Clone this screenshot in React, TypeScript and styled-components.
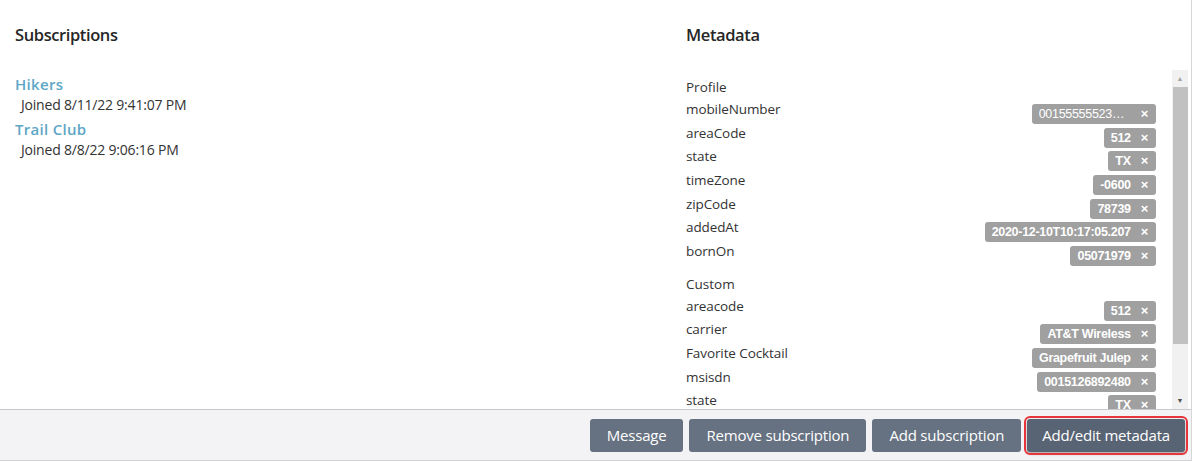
import React, { FC } from 'react';
import styled, { createGlobalStyle } from 'styled-components';

const GlobalStyle = createGlobalStyle`
  html, body {
    margin: 0;
    padding: 0;
    background: #ffffff;
  }
  body {
    font-family: 'Open Sans', 'Liberation Sans', sans-serif;
    color: #333;
  }
`;

interface MetaItem {
  key: string;
  value: string;
  clip?: boolean;
}

interface MetaSection {
  title: string;
  items: MetaItem[];
}

const subscriptions = [
  { name: 'Hikers', joined: 'Joined 8/11/22 9:41:07 PM' },
  { name: 'Trail Club', joined: 'Joined 8/8/22 9:06:16 PM' },
];

const sections: MetaSection[] = [
  {
    title: 'Profile',
    items: [
      { key: 'mobileNumber', value: '0015555552345678', clip: true },
      { key: 'areaCode', value: '512' },
      { key: 'state', value: 'TX' },
      { key: 'timeZone', value: '-0600' },
      { key: 'zipCode', value: '78739' },
      { key: 'addedAt', value: '2020-12-10T10:17:05.207' },
      { key: 'bornOn', value: '05071979' },
    ],
  },
  {
    title: 'Custom',
    items: [
      { key: 'areacode', value: '512' },
      { key: 'carrier', value: 'AT&T Wireless' },
      { key: 'Favorite Cocktail', value: 'Grapefruit Julep' },
      { key: 'msisdn', value: '0015126892480' },
      { key: 'state', value: 'TX' },
      { key: 'zip', value: '78739' },
    ],
  },
];

const Page = styled.div`
  width: 1191px;
  height: 461px;
  border-right: 1px solid #d6d6d8;
  display: flex;
  flex-direction: column;
  overflow: hidden;
`;

const Body = styled.div`
  flex: 1;
  min-height: 0;
  display: grid;
  grid-template-columns: 671px 1fr;
  padding-left: 15px;
`;

const Column = styled.div`
  display: flex;
  flex-direction: column;
  min-height: 0;
`;

const Heading = styled.h2`
  margin: 0;
  padding-top: 23px;
  height: 46px;
  box-sizing: border-box;
  font-size: 16.5px;
  font-weight: 600;
  letter-spacing: -0.4px;
  color: #262626;
`;

const SubList = styled.div`
  padding-top: 28px;
  display: flex;
  flex-direction: column;
`;

const SubName = styled.a`
  font-size: 15px;
  font-weight: 600;
  color: #5ea6c6;
  line-height: 20px;
  height: 21px;
  letter-spacing: 0.3px;
  text-decoration: none;
  cursor: pointer;
`;

const SubJoined = styled.div`
  padding-left: 6px;
  font-size: 14px;
  line-height: 20px;
  height: 24px;
  color: #333;
  letter-spacing: -0.2px;
`;

const MetaBox = styled.div`
  flex: 1;
  min-height: 0;
  margin-top: 22px;
  display: flex;
  padding-right: 3px;
`;

const MetaScroll = styled.div`
  flex: 1;
  overflow: hidden;
  padding: 8px 16px 0 0;
`;

const Section = styled.div`
  margin-bottom: 7px;
`;

const SectionTitle = styled.div`
  font-size: 13.5px;
  line-height: 22px;
  height: 24px;
  color: #333;
`;

const Row = styled.div`
  display: flex;
  justify-content: space-between;
  align-items: flex-start;
  height: 23.67px;
`;

const Key = styled.div`
  font-size: 13.5px;
  line-height: 19px;
  color: #333;
  letter-spacing: -0.1px;
`;

const Tag = styled.span`
  margin-top: 4px;
  display: inline-flex;
  align-items: center;
  gap: 10px;
  height: 20px;
  padding: 0 8px 0 7px;
  border-radius: 3px;
  background: #a0a0a0;
  color: #fff;
  font-family: 'Liberation Sans', sans-serif;
  font-size: 12.5px;
  font-weight: 700;
  letter-spacing: -0.3px;
`;

const TagText = styled.span<{ $clip?: boolean }>`
  white-space: nowrap;
  ${(p) =>
    p.$clip &&
    `
    max-width: 92px;
    overflow: hidden;
    text-overflow: ellipsis;
    font-weight: 400;
  `}
`;

const TagClose = styled.span`
  font-size: 13px;
  font-weight: 700;
  line-height: 1;
  margin-top: -1px;
`;

const Scrollbar = styled.div`
  width: 16px;
  margin-top: 2px;
  background: #f1f1f1;
  display: flex;
  flex-direction: column;
  align-items: center;
`;

const Arrow = styled.div<{ $down?: boolean }>`
  height: 17px;
  width: 16px;
  display: flex;
  align-items: center;
  justify-content: center;
  color: ${(p) => (p.$down ? '#505050' : '#a3a3a3')};
  font-size: 7px;
`;

const Thumb = styled.div`
  width: 15px;
  height: 257px;
  background: #c1c1c1;
`;

const Spacer = styled.div`
  flex: 1;
`;

const Footer = styled.div`
  height: 52px;
  box-sizing: border-box;
  background: #f3f2f4;
  border-top: 1px solid #c9c9cb;
  border-bottom: 1px solid #d2d2d4;
  display: flex;
  justify-content: flex-end;
  align-items: center;
  gap: 6px;
  padding-right: 6px;
`;

const Button = styled.button<{ $active?: boolean }>`
  height: 33px;
  padding: 0 17px;
  border: none;
  border-radius: 3px;
  background: ${(p) => (p.$active ? '#586373' : '#667181')};
  color: #fff;
  font-family: 'Open Sans', sans-serif;
  font-size: 15px;
  letter-spacing: -0.2px;
  cursor: pointer;
  ${(p) =>
    p.$active &&
    `
    padding: 0 15px;
    outline: 2px solid #e8353b;
    outline-offset: 1px;
    box-shadow: 0 2px 3px rgba(0,0,0,0.3);
  `}
`;

const App: FC = () => {
  return (
    <>
      <GlobalStyle />
      <Page>
        <Body>
          <Column>
            <Heading>Subscriptions</Heading>
            <SubList>
              {subscriptions.map((s) => (
                <React.Fragment key={s.name}>
                  <SubName>{s.name}</SubName>
                  <SubJoined>{s.joined}</SubJoined>
                </React.Fragment>
              ))}
            </SubList>
          </Column>
          <Column>
            <Heading>Metadata</Heading>
            <MetaBox>
              <MetaScroll>
                {sections.map((sec) => (
                  <Section key={sec.title}>
                    <SectionTitle>{sec.title}</SectionTitle>
                    {sec.items.map((it) => (
                      <Row key={it.key}>
                        <Key>{it.key}</Key>
                        <Tag>
                          <TagText $clip={it.clip}>{it.value}</TagText>
                          <TagClose>×</TagClose>
                        </Tag>
                      </Row>
                    ))}
                  </Section>
                ))}
              </MetaScroll>
              <Scrollbar>
                <Arrow>▲</Arrow>
                <Thumb />
                <Spacer />
                <Arrow $down>▼</Arrow>
              </Scrollbar>
            </MetaBox>
          </Column>
        </Body>
        <Footer>
          <Button>Message</Button>
          <Button>Remove subscription</Button>
          <Button>Add subscription</Button>
          <Button $active>Add/edit metadata</Button>
        </Footer>
      </Page>
    </>
  );
};

export default App;
